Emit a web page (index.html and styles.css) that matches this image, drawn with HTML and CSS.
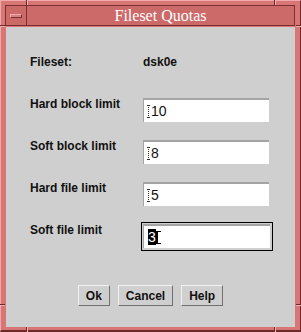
FILE: index.html
```html
<!DOCTYPE html>
<html lang="en">
<head>
    <meta charset="UTF-8">
    <title>Fileset Quotas</title>
    <link rel="stylesheet" href="styles.css">
</head>
<body>

    <div class="window">
        <!-- resize corner marks on the frame -->
        <span class="notch vert top-left"></span>
        <span class="notch vert top-right"></span>
        <span class="notch vert bottom-left"></span>
        <span class="notch vert bottom-right"></span>
        <span class="notch horiz left-top"></span>
        <span class="notch horiz right-top"></span>
        <span class="notch horiz left-bottom"></span>
        <span class="notch horiz right-bottom"></span>

        <div class="titlebar">
            <div class="menu-btn"><span class="menu-bar"></span></div>
            <div class="title">Fileset Quotas</div>
        </div>

        <div class="content">
            <div class="info">
                <span class="label">Fileset:</span>
                <span class="value">dsk0e</span>
            </div>

            <div class="fields">
                <div class="row">
                    <label class="label">Hard block limit</label>
                    <div class="field"><span class="caret"></span>10</div>
                </div>
                <div class="row">
                    <label class="label">Soft block limit</label>
                    <div class="field"><span class="caret"></span>8</div>
                </div>
                <div class="row">
                    <label class="label">Hard file limit</label>
                    <div class="field"><span class="caret"></span>5</div>
                </div>
                <div class="row">
                    <label class="label">Soft file limit</label>
                    <div class="focus">
                        <div class="field"><span class="selected">3</span><span class="caret solid"></span></div>
                    </div>
                </div>
            </div>

            <div class="buttons">
                <button>Ok</button>
                <button>Cancel</button>
                <button>Help</button>
            </div>
        </div>
    </div>

</body>
</html>
```

FILE: styles.css
```css
body {
    margin: 0;
    font-family: "Liberation Sans", Arial, sans-serif;
}

.window {
    position: relative;
    width: 301px;
    height: 332px;
    box-sizing: border-box;
    background-color: #d87676;
    border-top: 1px solid #eeaaaa;
    border-left: 1px solid #eeaaaa;
    border-right: 1px solid #6e2a2a;
    border-bottom: 2px solid #6e2a2a;
    padding: 4px 5px 3px 4px;
    display: flex;
    flex-direction: column;
}

/* frame corner marks */
.notch {
    position: absolute;
    background-color: #6e2a2a;
}

.notch.vert {
    width: 1px;
    height: 5px;
    border-right: 1px solid #f0b0b0;
}

.notch.horiz {
    width: 5px;
    height: 1px;
    border-bottom: 1px solid #f0b0b0;
}

.top-left { top: -1px; left: 25px; }
.top-right { top: -1px; left: 273px; }
.bottom-left { bottom: -2px; left: 25px; }
.bottom-right { bottom: -2px; left: 273px; }
.left-top { left: -1px; top: 24px; }
.right-top { right: -1px; top: 24px; }
.left-bottom { left: -1px; top: 303px; }
.right-bottom { right: -1px; top: 303px; }

.titlebar {
    height: 21px;
    box-sizing: border-box;
    border: 1px solid #7a3030;
    background-color: #cc6a6a;
    display: flex;
}

.menu-btn {
    width: 20px;
    border-right: 1px solid #7a3030;
    display: flex;
    align-items: center;
    justify-content: center;
}

.menu-bar {
    width: 10px;
    height: 2px;
    background-color: #d88080;
    border-top: 1px solid #f0b0b0;
    border-left: 1px solid #f0b0b0;
    border-right: 1px solid #7a3030;
    border-bottom: 1px solid #7a3030;
}

.title {
    flex: 1;
    text-align: center;
    color: white;
    font-family: "Liberation Serif", "Times New Roman", serif;
    font-size: 16px;
    line-height: 19px;
}

.content {
    flex: 1;
    margin-top: 1px;
    margin-left: 1px;
    background-color: #cfcfcf;
    padding: 28px 0 0 24px;
    display: flex;
    flex-direction: column;
}

.label {
    font-size: 12px;
    font-weight: bold;
    color: #111;
    width: 113px;
}

.info {
    display: flex;
    font-size: 12px;
    line-height: 14px;
}

.value {
    font-weight: bold;
    color: #111;
}

.fields {
    margin-top: 29px;
    display: flex;
    flex-direction: column;
    gap: 18px;
}

.row {
    display: flex;
    align-items: flex-start;
    height: 24px;
}

.row .label {
    margin-top: -1px;
    line-height: 14px;
}

.field {
    width: 126px;
    height: 24px;
    box-sizing: border-box;
    background-color: white;
    border-top: 2px solid #a4a4a4;
    border-left: 1px solid #a4a4a4;
    padding-left: 4px;
    display: flex;
    align-items: center;
    font-size: 14px;
    color: #111;
}

/* dotted I-beam for unfocused fields */
.caret {
    position: relative;
    width: 1px;
    height: 13px;
    margin-right: 1px;
    border-left: 1px dotted #333;
}

.caret::before,
.caret::after {
    content: "";
    position: absolute;
    left: -2px;
    width: 3px;
    height: 1px;
    background-color: #333;
}

.caret::before { top: 0; }
.caret::after { bottom: 0; }

.caret.solid {
    border-left: 2px solid #000;
    margin-left: 0;
}

.caret.solid::before,
.caret.solid::after {
    left: -1px;
    width: 4px;
    background-color: #000;
}

.focus {
    margin: -2px 0 0 -2px;
    border: 1px solid #000;
    padding: 1px 2px 2px 1px;
}

.focus .field {
    width: 127px;
}

.selected {
    background-color: #000;
    color: white;
}

.buttons {
    margin-top: 37px;
    margin-left: -24px;
    display: flex;
    justify-content: center;
    gap: 8px;
}

button {
    height: 21px;
    padding: 0 7px;
    background-color: #cfcfcf;
    font-family: "Liberation Sans", Arial, sans-serif;
    font-size: 12px;
    font-weight: bold;
    color: #111;
    border-top: 1px solid #f2f2f2;
    border-left: 1px solid #f2f2f2;
    border-right: 1px solid #707070;
    border-bottom: 1px solid #707070;
    cursor: pointer;
}
```
